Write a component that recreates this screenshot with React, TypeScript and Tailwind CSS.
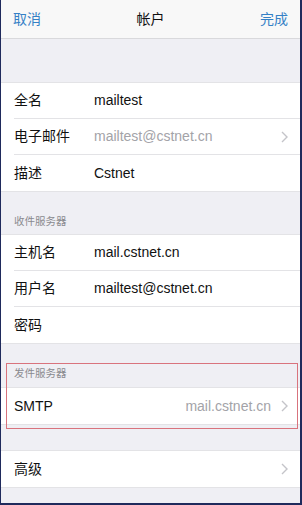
import React from "react";

const Chevron = () => (
  <svg width="7" height="12" viewBox="0 0 7 12" className="shrink-0">
    <polyline points="1,1 6,6 1,11" fill="none" stroke="#c4c4c9" strokeWidth="1.4" />
  </svg>
);

type RowProps = { label: string; value?: string; gray?: boolean; chevron?: boolean; last?: boolean; right?: boolean };

const Row = ({ label, value, gray, chevron, last, right }: RowProps) => (
  <div className="flex h-[36px] pl-[13px] bg-white">
    <div className={`flex flex-1 items-center pr-[12px] ${last ? "" : "border-b border-[#e3e3e6]"}`}>
      <div className="w-[80px] shrink-0 text-[14px] text-[#111]">{label}</div>
      <div className={`flex-1 text-[14px] ${gray ? "text-[#a3a3a8]" : "text-[#111]"} ${right ? "text-right pr-[10px]" : ""}`}>{value}</div>
      {chevron && <Chevron />}
    </div>
  </div>
);

export default function App() {
  return (
    <div className="relative w-[302px] h-[505px] bg-[#efeff4] border-l border-r-2 border-b-2 border-[#1f2a5c] overflow-hidden font-['Liberation_Sans','Noto_Sans_CJK_SC',sans-serif]">
      <div className="h-[39px] bg-[#f8f8f8] border-b border-[#d9d9dc] flex items-center justify-between pl-[12px] pr-[12px]">
        <span className="text-[14px] text-[#3581c6]">取消</span>
        <span className="text-[14px] text-[#111]">帐户</span>
        <span className="text-[14px] text-[#3581c6]">完成</span>
      </div>
      <div className="h-[44px]" />
      <div className="shadow-[0_1px_0_#e3e3e6,0_-1px_0_#e3e3e6]">
        <Row label="全名" value="mailtest" />
        <Row label="电子邮件" value="mailtest@cstnet.cn" gray chevron />
        <Row label="描述" value="Cstnet" last />
      </div>
      <div className="h-[44px] flex items-end pb-[5px] pl-[13px] text-[10.5px] text-[#8a8a8f]">收件服务器</div>
      <div className="shadow-[0_1px_0_#e3e3e6,0_-1px_0_#e3e3e6]">
        <Row label="主机名" value="mail.cstnet.cn" />
        <Row label="用户名" value="mailtest@cstnet.cn" />
        <Row label="密码" last />
      </div>
      <div className="h-[45px] flex items-end pb-[6px] pl-[13px] text-[10.5px] text-[#8a8a8f]">发件服务器</div>
      <div className="shadow-[0_1px_0_#e3e3e6,0_-1px_0_#e3e3e6]">
        <Row label="SMTP" value="mail.cstnet.cn" gray chevron right last />
      </div>
      <div className="h-[27px]" />
      <div className="shadow-[0_1px_0_#e3e3e6,0_-1px_0_#e3e3e6]">
        <Row label="高级" chevron last />
      </div>
      <div className="absolute left-[5px] top-[363px] w-[292px] h-[66px] border border-[#d9737d]" />
    </div>
  );
}
